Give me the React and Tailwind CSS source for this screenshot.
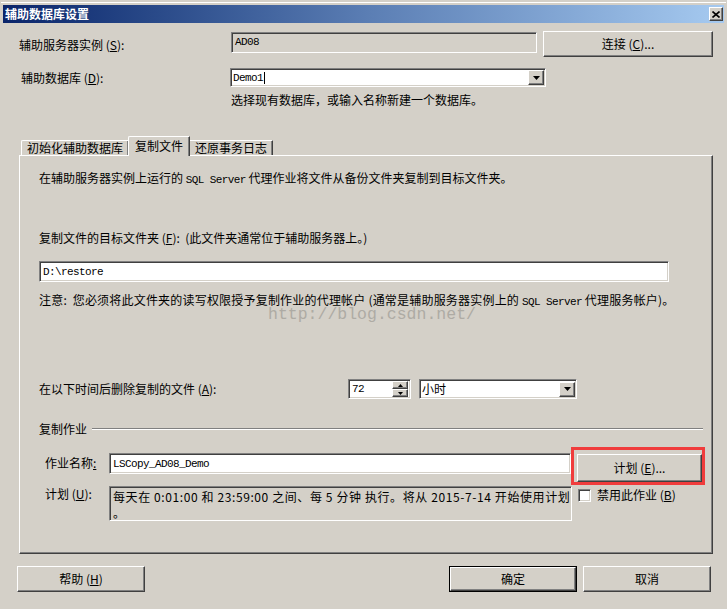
import React from 'react';

const sunken = 'border border-t-[#808080] border-l-[#808080] border-b-white border-r-white shadow-[inset_1px_1px_0_#404040,inset_-1px_-1px_0_#d4d0c8]';
const raised = 'border border-t-white border-l-white border-b-[#404040] border-r-[#404040] shadow-[inset_-1px_-1px_0_#808080]';
const mono = "font-['Liberation_Mono',monospace] text-[11px] tracking-[-0.6px]";

const Mono = ({ children }) => <span className={mono}>{children}</span>;

const Arrow = ({ up }) => (
  <svg width="7" height="4" viewBox="0 0 7 4">
    <path d={up ? 'M3.5 0L7 4H0z' : 'M0 0h7L3.5 4z'} fill="#000" />
  </svg>
);

const DropButton = () => (
  <div className={`${raised} w-[16px] h-[15px] bg-[#d4d0c8] flex items-center justify-center`}>
    <Arrow />
  </div>
);

const Combo = ({ value, className, textClass }) => (
  <div className={`${sunken} bg-white flex items-center justify-between pl-[2px] pr-[1px] ${className}`}>
    <span className={textClass}>{value}</span>
    <DropButton />
  </div>
);

const Button = ({ children, className }) => (
  <div className={`${raised} bg-[#d4d0c8] flex items-center justify-center ${className}`}>
    {children}
  </div>
);

export default function App() {
  return (
    <div className="w-[727px] h-[609px] bg-[#d4d0c8] overflow-hidden text-black text-[12px] leading-[14px] font-['Noto_Sans_CJK_SC',sans-serif]">
      {/* window frame top */}
      <div className="h-[2px]" />
      <div className="h-[1px] mx-[1px] bg-white" />
      <div className="h-[2px]" />

      {/* title bar */}
      <div className="mx-[3px] h-[18px] flex items-center justify-between pl-[2px] pr-[1px] bg-gradient-to-r from-[#0a246a] via-[#5a7db3] to-[#a6caf0]">
        <span className="text-white font-bold text-[12px] leading-[14px]">辅助数据库设置</span>
        <div className={`${raised} w-[14px] h-[14px] bg-[#d4d0c8] flex items-center justify-center`}>
          <svg width="8" height="7" viewBox="0 0 8 7">
            <path d="M0.5 0.5L7.5 6.5M7.5 0.5L0.5 6.5" stroke="#000" strokeWidth="1.6" />
          </svg>
        </div>
      </div>

      {/* server instance */}
      <div className="mt-[8px] pl-[19px] flex items-start h-[26px]">
        <div className="w-[212px] self-center mt-[1px]">
          辅助服务器实例 (<u>S</u>):
        </div>
        <div className={`${sunken} mt-[1px] w-[306px] h-[21px] flex items-start pt-[2px] pl-[3px] bg-[#d4d0c8]`}>
          <Mono>AD08</Mono>
        </div>
        <Button className="ml-[6px] w-[170px] h-[26px]">
          <span>连接 (<u>C</u>)...</span>
        </Button>
      </div>

      {/* secondary database */}
      <div className="mt-[11px] pl-[21px] flex items-center">
        <div className="w-[209px]">辅助数据库 (<u>D</u>):</div>
        <Combo
          value={<>Demo1<span className="inline-block w-px h-[12px] bg-black align-middle ml-px" /></>}
          className="w-[316px] h-[19px]"
          textClass={mono}
        />
      </div>
      <div className="mt-[6px] ml-[231px]">选择现有数据库，或输入名称新建一个数据库。</div>

      {/* tabs */}
      <div className="mt-[29px] ml-[19px] w-[694px]">
        <div className="flex items-end h-[19px] pl-[2px]">
          <div className="w-[107px] h-[15px] border-t border-l border-white shadow-[inset_-1px_0_0_#808080] rounded-tl-[2px] flex items-center justify-center">
            初始化辅助数据库
          </div>
          <div className="relative z-10 -mb-px w-[62px] h-[20px] bg-[#d4d0c8] border-t border-l border-white border-r border-r-[#404040] shadow-[inset_-1px_0_0_#808080] rounded-tl-[2px] flex items-start justify-center pt-[2px]">
            复制文件
          </div>
          <div className="w-[83px] h-[15px] border-t border-white border-r border-r-[#404040] shadow-[inset_-1px_0_0_#808080] flex items-center justify-center">
            还原事务日志
          </div>
        </div>

        {/* panel */}
        <div className="relative h-[399px] border-t border-l border-white border-r border-b border-r-[#404040] border-b-[#404040] shadow-[inset_-1px_-1px_0_#808080] pl-[19px] flex flex-col">
          <div className="mt-[15px]">
            在辅助服务器实例上运行的 <Mono>SQL Server</Mono> 代理作业将文件从备份文件夹复制到目标文件夹。
          </div>
          <div className="mt-[44px]">
            复制文件的目标文件夹 (<u>F</u>):&nbsp; (此文件夹通常位于辅助服务器上。)
          </div>
          <div className={`${sunken} mt-[16px] w-[630px] h-[21px] bg-white flex items-center pl-[3px]`}>
            <Mono>D:\restore</Mono>
          </div>
          <div className="mt-[11px] tracking-[0.2px]">
            注意:&nbsp; 您必须将此文件夹的读写权限授予复制作业的代理帐户 (通常是辅助服务器实例上的 <Mono>SQL Server</Mono> 代理服务帐户)。
          </div>

          {/* watermark */}
          <div className="absolute left-[248px] top-[152px] text-[16.5px] leading-[14px] text-[#aeaba4] font-['Liberation_Mono',monospace]">
            http://blog.csdn.net/
          </div>

          <div className="mt-[70px] flex items-center h-[20px]">
            <div className="w-[309px]">在以下时间后删除复制的文件 (<u>A</u>):</div>
            <div className={`${sunken} w-[63px] h-[20px] bg-white flex items-center justify-between pl-[3px] pr-[2px]`}>
              <Mono>72</Mono>
              <div className="flex flex-col">
                <div className={`${raised} w-[16px] h-[8px] bg-[#d4d0c8] flex items-center justify-center`}>
                  <svg width="5" height="3" viewBox="0 0 5 3"><path d="M2.5 0L5 3H0z" fill="#000" /></svg>
                </div>
                <div className={`${raised} w-[16px] h-[8px] bg-[#d4d0c8] flex items-center justify-center`}>
                  <svg width="5" height="3" viewBox="0 0 5 3"><path d="M0 0h5L2.5 3z" fill="#000" /></svg>
                </div>
              </div>
            </div>
            <Combo value="小时" className="ml-[8px] w-[158px] h-[20px]" />
          </div>

          {/* copy job group */}
          <div className="mt-[23px] flex items-center">
            <span>复制作业</span>
            <div className="ml-[5px] w-[611px] h-[2px] border-t border-t-[#808080] border-b border-b-white" />
          </div>

          <div className="mt-[17px] flex items-start pl-[6px]">
            <div className="w-[64px] mt-[3px]">作业名称<u>:</u></div>
            <div className={`${sunken} w-[462px] h-[21px] bg-white flex items-center pl-[3px]`}>
              <Mono>LSCopy_AD08_Demo</Mono>
            </div>
            <div className="relative ml-[6px] mt-[1px]">
              <Button className="w-[125px] h-[28px]">
                <span>计划 (<u>E</u>)...</span>
              </Button>
              <div className="absolute -left-[6px] -top-[7px] -right-[3px] -bottom-[3px] border-[3px] border-[#f03c3c]" />
            </div>
          </div>

          <div className="mt-[4px] flex items-start pl-[6px]">
            <div className="w-[64px] mt-[1px]">计划 (<u>U</u>):</div>
            <div className={`${sunken} w-[463px] h-[35px] bg-[#d4d0c8] pl-[3px] pt-[2px] leading-[16px] tracking-[0.6px]`}>
              每天在 0:01:00 和 23:59:00 之间、每 5 分钟 执行。将从 2015-7-14 开始使用计划
              <br />。
            </div>
            <div className="ml-[6px] mt-[2px] flex items-center">
              <div className={`${sunken} w-[13px] h-[13px] bg-white`} />
              <span className="ml-[6px]">禁用此作业 (<u>B</u>)</span>
            </div>
          </div>
        </div>
      </div>

      {/* bottom buttons */}
      <div className="mt-[12px] flex items-center pl-[17px]">
        <Button className="w-[128px] h-[26px]">
          <span>帮助 (<u>H</u>)</span>
        </Button>
        <div className="ml-[304px] w-[128px] h-[26px] border border-black flex">
          <Button className="flex-1">
            <span>确定</span>
          </Button>
        </div>
        <Button className="ml-[6px] w-[128px] h-[26px]">
          <span>取消</span>
        </Button>
      </div>
    </div>
  );
}
